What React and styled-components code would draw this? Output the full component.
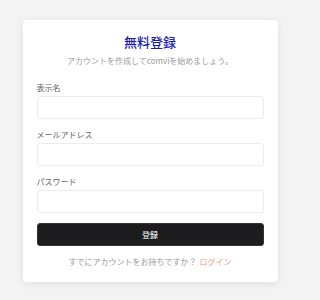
import styled, { createGlobalStyle } from "styled-components";

const GlobalStyle = createGlobalStyle`
  html, body {
    margin: 0;
    padding: 0;
    background: #f3f3f3;
  }
  body {
    font-family: "Noto Sans CJK JP", "Noto Sans", sans-serif;
  }
`;

const Page = styled.div`
  width: 300px;
  height: 300px;
  box-sizing: border-box;
  padding-top: 20px;
  display: flex;
  justify-content: center;
  align-items: flex-start;
`;

const Card = styled.form`
  width: 255px;
  box-sizing: border-box;
  background: #fff;
  border-radius: 4px;
  box-shadow: 0 2px 8px rgba(0, 0, 0, 0.08);
  padding: 13px 14px 14px;
  display: flex;
  flex-direction: column;
`;

const Title = styled.h1`
  margin: 0;
  text-align: center;
  font-size: 13px;
  line-height: 18px;
  font-weight: 500;
  color: #1c1cb0;
`;

const Sub = styled.p`
  margin: 4px 0 15px;
  text-align: center;
  font-size: 8px;
  line-height: 12px;
  color: #9a9a9a;
`;

const Field = styled.div`
  display: flex;
  flex-direction: column;
  gap: 2px;
  margin-bottom: ${(props) => props.mb || 10}px;
`;

const Label = styled.label`
  font-size: 8px;
  line-height: 12px;
  color: #666;
`;

const Input = styled.input`
  height: 23px;
  box-sizing: border-box;
  border: 1px solid #ececec;
  border-radius: 3px;
  background: #fff;
  outline: none;
  padding: 0 6px;
`;

const Button = styled.button`
  height: 23px;
  border: 1px solid #333;
  border-radius: 3px;
  background: #1c1c1e;
  color: #e8e8e8;
  font-family: inherit;
  font-size: 8px;
  font-weight: 500;
  cursor: pointer;
`;

const Footer = styled.p`
  margin: 10px 0 0;
  text-align: center;
  font-size: 8px;
  line-height: 12px;
  color: #999;
`;

const LinkText = styled.a`
  color: #f09a7c;
  text-decoration: none;
  margin-left: 3px;
`;

export default function App() {
  return (
    <>
      <GlobalStyle />
      <Page>
        <Card onSubmit={(e) => e.preventDefault()}>
          <Title>無料登録</Title>
          <Sub>アカウントを作成してcomviを始めましょう。</Sub>
          <Field>
            <Label>表示名</Label>
            <Input type="text" />
          </Field>
          <Field>
            <Label>メールアドレス</Label>
            <Input type="email" />
          </Field>
          <Field mb={10}>
            <Label>パスワード</Label>
            <Input type="password" />
          </Field>
          <Button type="submit">登録</Button>
          <Footer>
            すでにアカウントをお持ちですか？
            <LinkText href="#">ログイン</LinkText>
          </Footer>
        </Card>
      </Page>
    </>
  );
}
